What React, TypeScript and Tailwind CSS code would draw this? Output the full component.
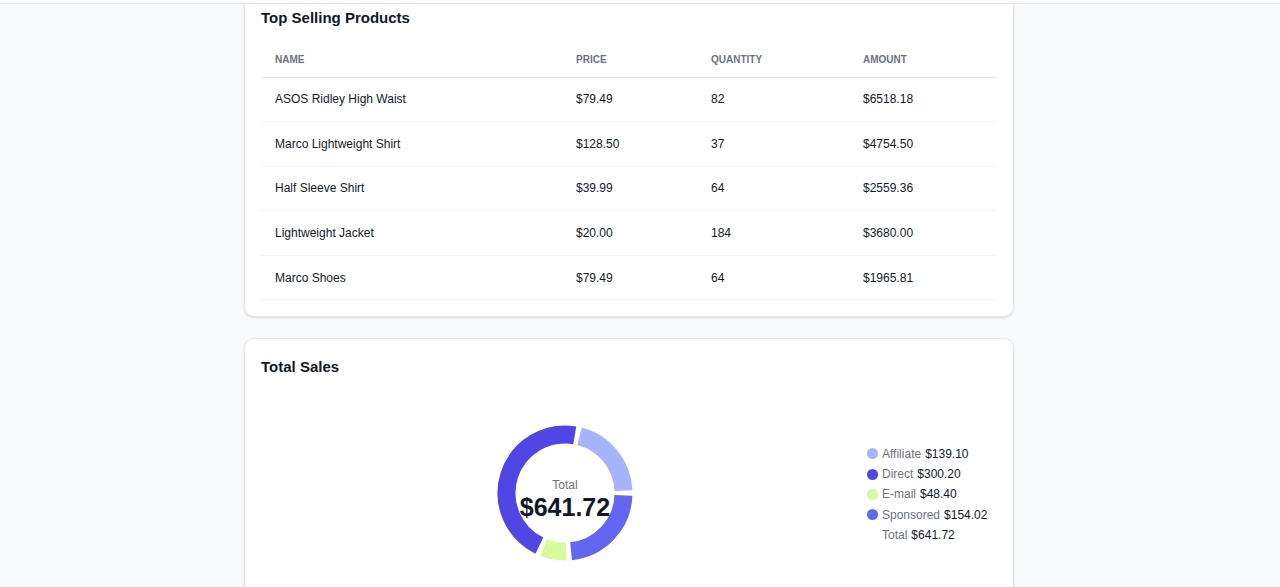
import React from 'react';

const products = [
  { name: 'ASOS Ridley High Waist', price: '$79.49', qty: '82', amount: '$6518.18' },
  { name: 'Marco Lightweight Shirt', price: '$128.50', qty: '37', amount: '$4754.50' },
  { name: 'Half Sleeve Shirt', price: '$39.99', qty: '64', amount: '$2559.36' },
  { name: 'Lightweight Jacket', price: '$20.00', qty: '184', amount: '$3680.00' },
  { name: 'Marco Shoes', price: '$79.49', qty: '64', amount: '$1965.81' },
];

const sales = [
  { label: 'Affiliate', value: 139.1, color: '#a5b4fc' },
  { label: 'Sponsored', value: 154.02, color: '#6366f1' },
  { label: 'E-mail', value: 48.4, color: '#d9f99d' },
  { label: 'Direct', value: 300.2, color: '#4f46e5' },
];

const legend = [
  { label: 'Affiliate', value: '$139.10', color: '#a5b4fc' },
  { label: 'Direct', value: '$300.20', color: '#4f46e5' },
  { label: 'E-mail', value: '$48.40', color: '#d9f99d' },
  { label: 'Sponsored', value: '$154.02', color: '#6366f1' },
];

const polar = (cx: number, cy: number, r: number, deg: number) => {
  const rad = ((deg - 90) * Math.PI) / 180;
  return [cx + r * Math.cos(rad), cy + r * Math.sin(rad)];
};

const arc = (cx: number, cy: number, r: number, a0: number, a1: number) => {
  const [x0, y0] = polar(cx, cy, r, a0);
  const [x1, y1] = polar(cx, cy, r, a1);
  const large = a1 - a0 > 180 ? 1 : 0;
  return `M ${x0} ${y0} A ${r} ${r} 0 ${large} 1 ${x1} ${y1}`;
};

const Donut = () => {
  const total = sales.reduce((s, d) => s + d.value, 0);
  let start = 12;
  const pad = 2.4;
  return (
    <div className="relative w-[136px] h-[136px]">
      <svg width="136" height="136" viewBox="0 0 136 136">
        {sales.map((d) => {
          const sweep = (d.value / total) * 360;
          const path = arc(68, 68, 58.5, start + pad, start + sweep - pad);
          start += sweep;
          return <path key={d.label} d={path} fill="none" stroke={d.color} strokeWidth="18" />;
        })}
      </svg>
      <div className="absolute inset-0 flex flex-col items-center justify-center pt-[12px]">
        <span className="text-xs leading-4 text-gray-500">Total</span>
        <span className="text-[25px] leading-7 font-bold text-gray-900">$641.72</span>
      </div>
    </div>
  );
};

export default function App() {
  return (
    <div className="min-h-[587px] bg-gray-50 text-gray-900" style={{ fontFamily: '"Liberation Sans", Arial, sans-serif' }}>
      <div className="h-[4px] bg-white border-b border-gray-200" />
      <div className="w-[770px] ml-[244px] flex flex-col gap-[21px]">
        <div className="bg-white border border-t-0 border-gray-200 rounded-b-[10px] shadow-sm px-4 pt-[4px] pb-4">
          <h2 className="text-[15px] leading-5 font-bold text-gray-900">Top Selling Products</h2>
          <table className="w-full mt-[15px] border-collapse">
            <thead>
              <tr className="border-b border-gray-200 h-[34px] text-left">
                <th className="w-[301px] px-[14px] text-[10px] font-bold uppercase text-gray-500">Name</th>
                <th className="w-[135px] px-[14px] text-[10px] font-bold uppercase text-gray-500">Price</th>
                <th className="w-[152px] px-[14px] text-[10px] font-bold uppercase text-gray-500">Quantity</th>
                <th className="px-[14px] text-[10px] font-bold uppercase text-gray-500">Amount</th>
              </tr>
            </thead>
            <tbody>
              {products.map((p) => (
                <tr key={p.name} className="border-b border-gray-100 h-[44.6px] text-xs text-gray-900">
                  <td className="px-[14px]">{p.name}</td>
                  <td className="px-[14px]">{p.price}</td>
                  <td className="px-[14px]">{p.qty}</td>
                  <td className="px-[14px]">{p.amount}</td>
                </tr>
              ))}
            </tbody>
          </table>
        </div>

        <div className="bg-white border border-gray-200 rounded-[10px] shadow-sm px-4 pt-[18px] pb-10">
          <h2 className="text-[15px] leading-5 font-bold text-gray-900">Total Sales</h2>
          <div className="flex items-center mt-[48px]">
            <div className="flex-1 flex justify-center pl-[2px]">
              <Donut />
            </div>
            <div className="w-[130px] flex flex-col gap-[4.3px] pt-[2px]">
              {legend.map((l) => (
                <div key={l.label} className="flex items-center gap-[4px] text-xs leading-4">
                  <span className="w-[11px] h-[11px] rounded-full" style={{ backgroundColor: l.color }} />
                  <span className="text-gray-500">{l.label}</span>
                  <span className="text-gray-900">{l.value}</span>
                </div>
              ))}
              <div className="flex items-center gap-[4px] text-xs leading-4">
                <span className="w-[11px] h-[11px]" />
                <span className="text-gray-500">Total</span>
                <span className="text-gray-900">$641.72</span>
              </div>
            </div>
          </div>
        </div>
      </div>
    </div>
  );
}
